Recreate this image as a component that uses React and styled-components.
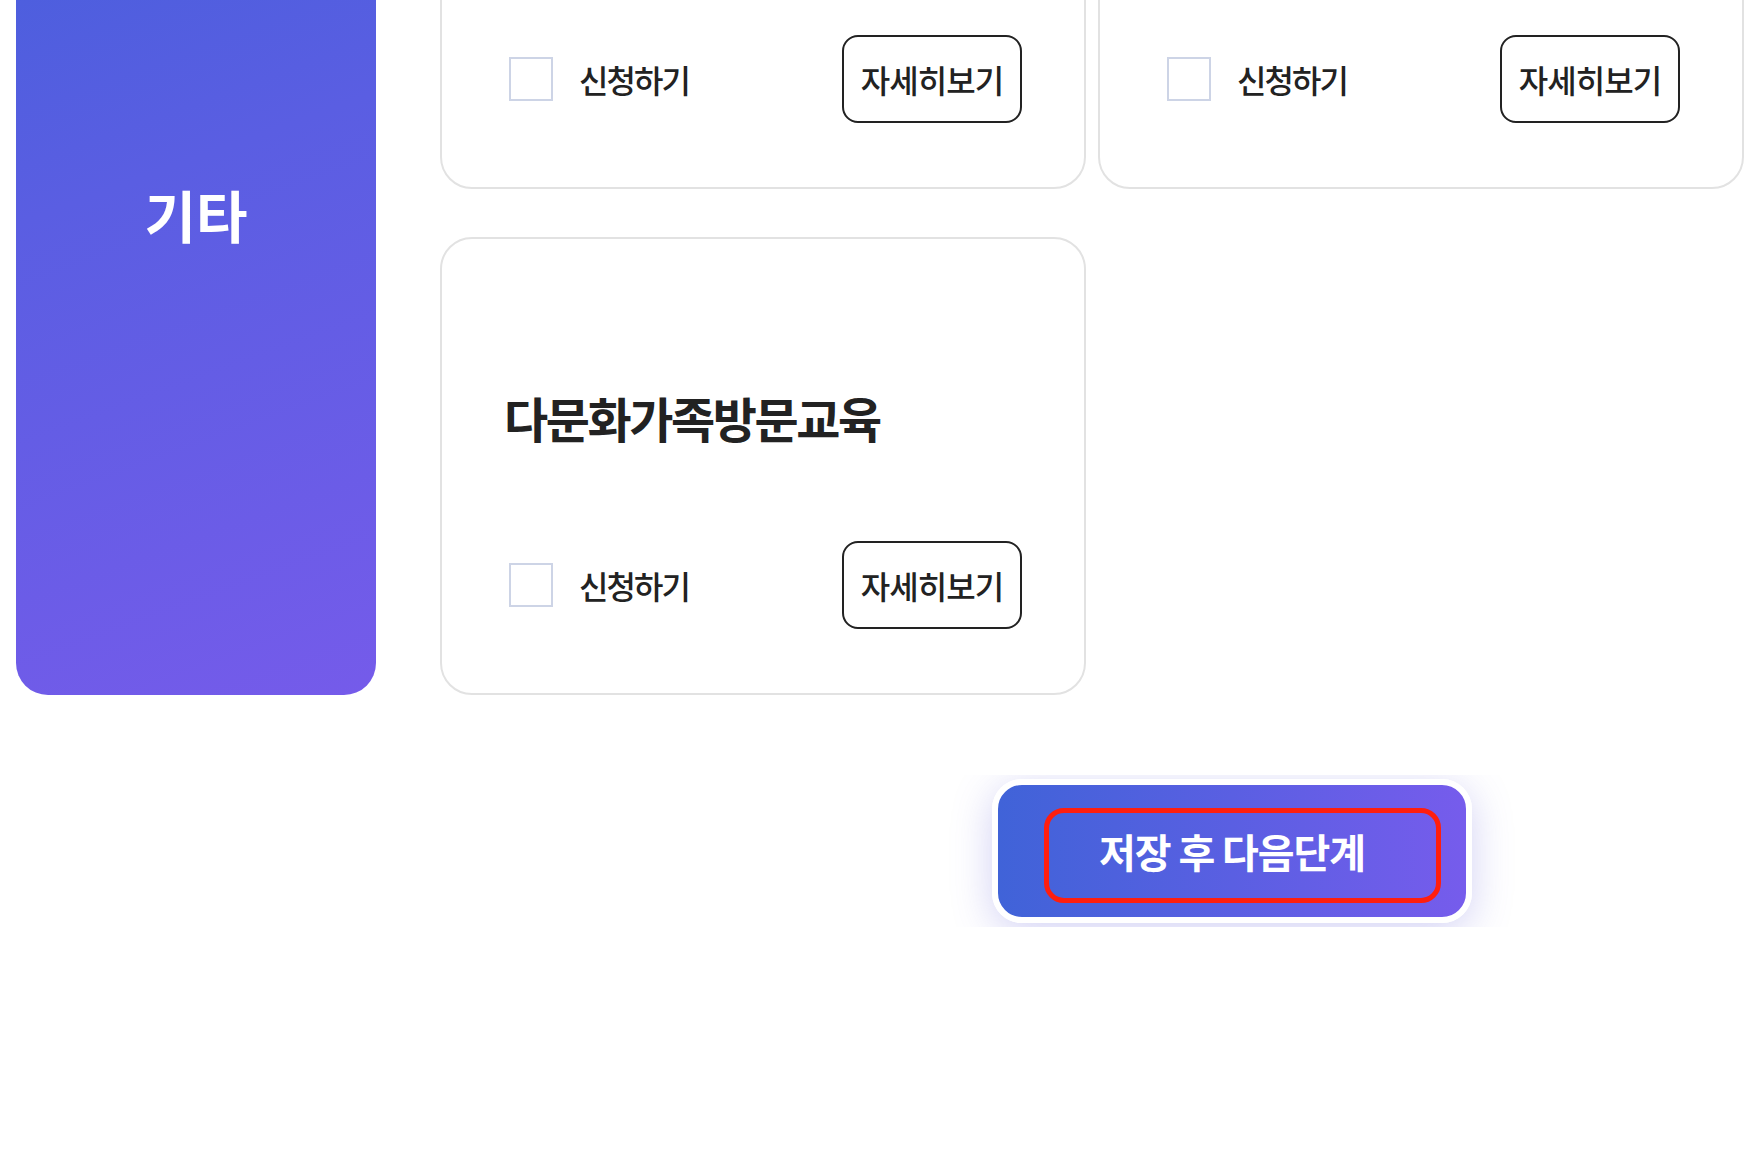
import styled, { createGlobalStyle } from 'styled-components'

const programs = [
  { id: 1, title: '가족상담' },
  { id: 2, title: '자녀생활지원' },
  { id: 3, title: '다문화가족방문교육' },
]

const App = () => {
  return (
    <>
      <GlobalStyle />
      <Page>
        <Section>
          <Sidebar>
            <SidebarTitle>기타</SidebarTitle>
          </Sidebar>
          <CardGrid>
            {programs.map((p) => (
              <Card key={p.id}>
                <CardTitle>{p.title}</CardTitle>
                <CardRow>
                  <CheckLabel>
                    <CheckBox type="checkbox" />
                    <span>신청하기</span>
                  </CheckLabel>
                  <DetailButton>자세히보기</DetailButton>
                </CardRow>
              </Card>
            ))}
          </CardGrid>
        </Section>
        <ButtonBar>
          <NextButton>
            <NextLabel>저장 후 다음단계</NextLabel>
          </NextButton>
        </ButtonBar>
      </Page>
    </>
  )
}

export default App

const GlobalStyle = createGlobalStyle`
  html, body {
    margin: 0;
    padding: 0;
    background: #fff;
    overflow: hidden;
  }
  body {
    font-family: "Noto Sans CJK KR", "Noto Sans", sans-serif;
    color: #222;
  }
`
const Page = styled.div`
  /* page is scrolled down a bit */
  margin-top: -269px;
  padding: 0 12px 0 16px;
`
const Section = styled.div`
  display: flex;
  gap: 64px;
`
const Sidebar = styled.div`
  flex: none;
  width: 360px;
  border-radius: 32px;
  background: linear-gradient(160deg, #3f5fd9 0%, #5a5ee2 45%, #755bea 100%);
  display: flex;
  align-items: center;
  justify-content: center;
`
const SidebarTitle = styled.h2`
  margin: 0;
  color: #fff;
  font-size: 56px;
  font-weight: 700;
  letter-spacing: 0;
`
const CardGrid = styled.div`
  flex: 1;
  display: grid;
  grid-template-columns: 1fr 1fr;
  column-gap: 12px;
  row-gap: 48px;
`
const Card = styled.div`
  height: 458px;
  box-sizing: border-box;
  border: 2px solid #e2e2e2;
  border-radius: 32px;
  padding: 62px 62px 64px;
  display: flex;
  flex-direction: column;
`
const CardTitle = styled.h3`
  margin: auto 0;
  padding-bottom: 6px;
  font-size: 48px;
  line-height: 1.2;
  font-weight: 700;
  letter-spacing: -2.4px;
  color: #222;
`
const CardRow = styled.div`
  display: flex;
  align-items: center;
  justify-content: space-between;
`
const CheckLabel = styled.label`
  display: flex;
  align-items: center;
  gap: 26px;
  font-size: 32px;
  font-weight: 500;
  letter-spacing: -1.9px;
  color: #222;
`
const CheckBox = styled.input`
  appearance: none;
  width: 44px;
  height: 44px;
  margin: 0 0 0 5px;
  border: 2px solid #cdd4e6;
  background: #fff;
  box-sizing: border-box;
`
const DetailButton = styled.button`
  width: 180px;
  height: 88px;
  border: 2px solid #222;
  border-radius: 16px;
  background: #fff;
  font-family: inherit;
  font-size: 32px;
  font-weight: 500;
  letter-spacing: -0.9px;
  color: #222;
  padding: 0;
`
const ButtonBar = styled.div`
  margin-top: 80px;
  padding: 4px 0 4px 976px;
  overflow: hidden;
`
const NextButton = styled.button`
  width: 480px;
  height: 144px;
  border: 6px solid #fff;
  border-radius: 30px;
  background: linear-gradient(90deg, #4063d8 0%, #5a5fe2 50%, #765cec 100%);
  box-shadow: 0 8px 40px rgba(92, 88, 214, 0.28);
  display: flex;
  align-items: center;
  justify-content: center;
  padding: 0;
  font-family: inherit;
`
const NextLabel = styled.span`
  width: 397px;
  height: 95px;
  margin: 8px 0 0 20px;
  padding: 0 20px 8px 0;
  box-sizing: border-box;
  border: 5px solid #ff1e0e;
  border-radius: 20px;
  display: flex;
  align-items: center;
  justify-content: center;
  color: #fff;
  font-size: 40px;
  font-weight: 700;
  letter-spacing: -1.1px;
`
